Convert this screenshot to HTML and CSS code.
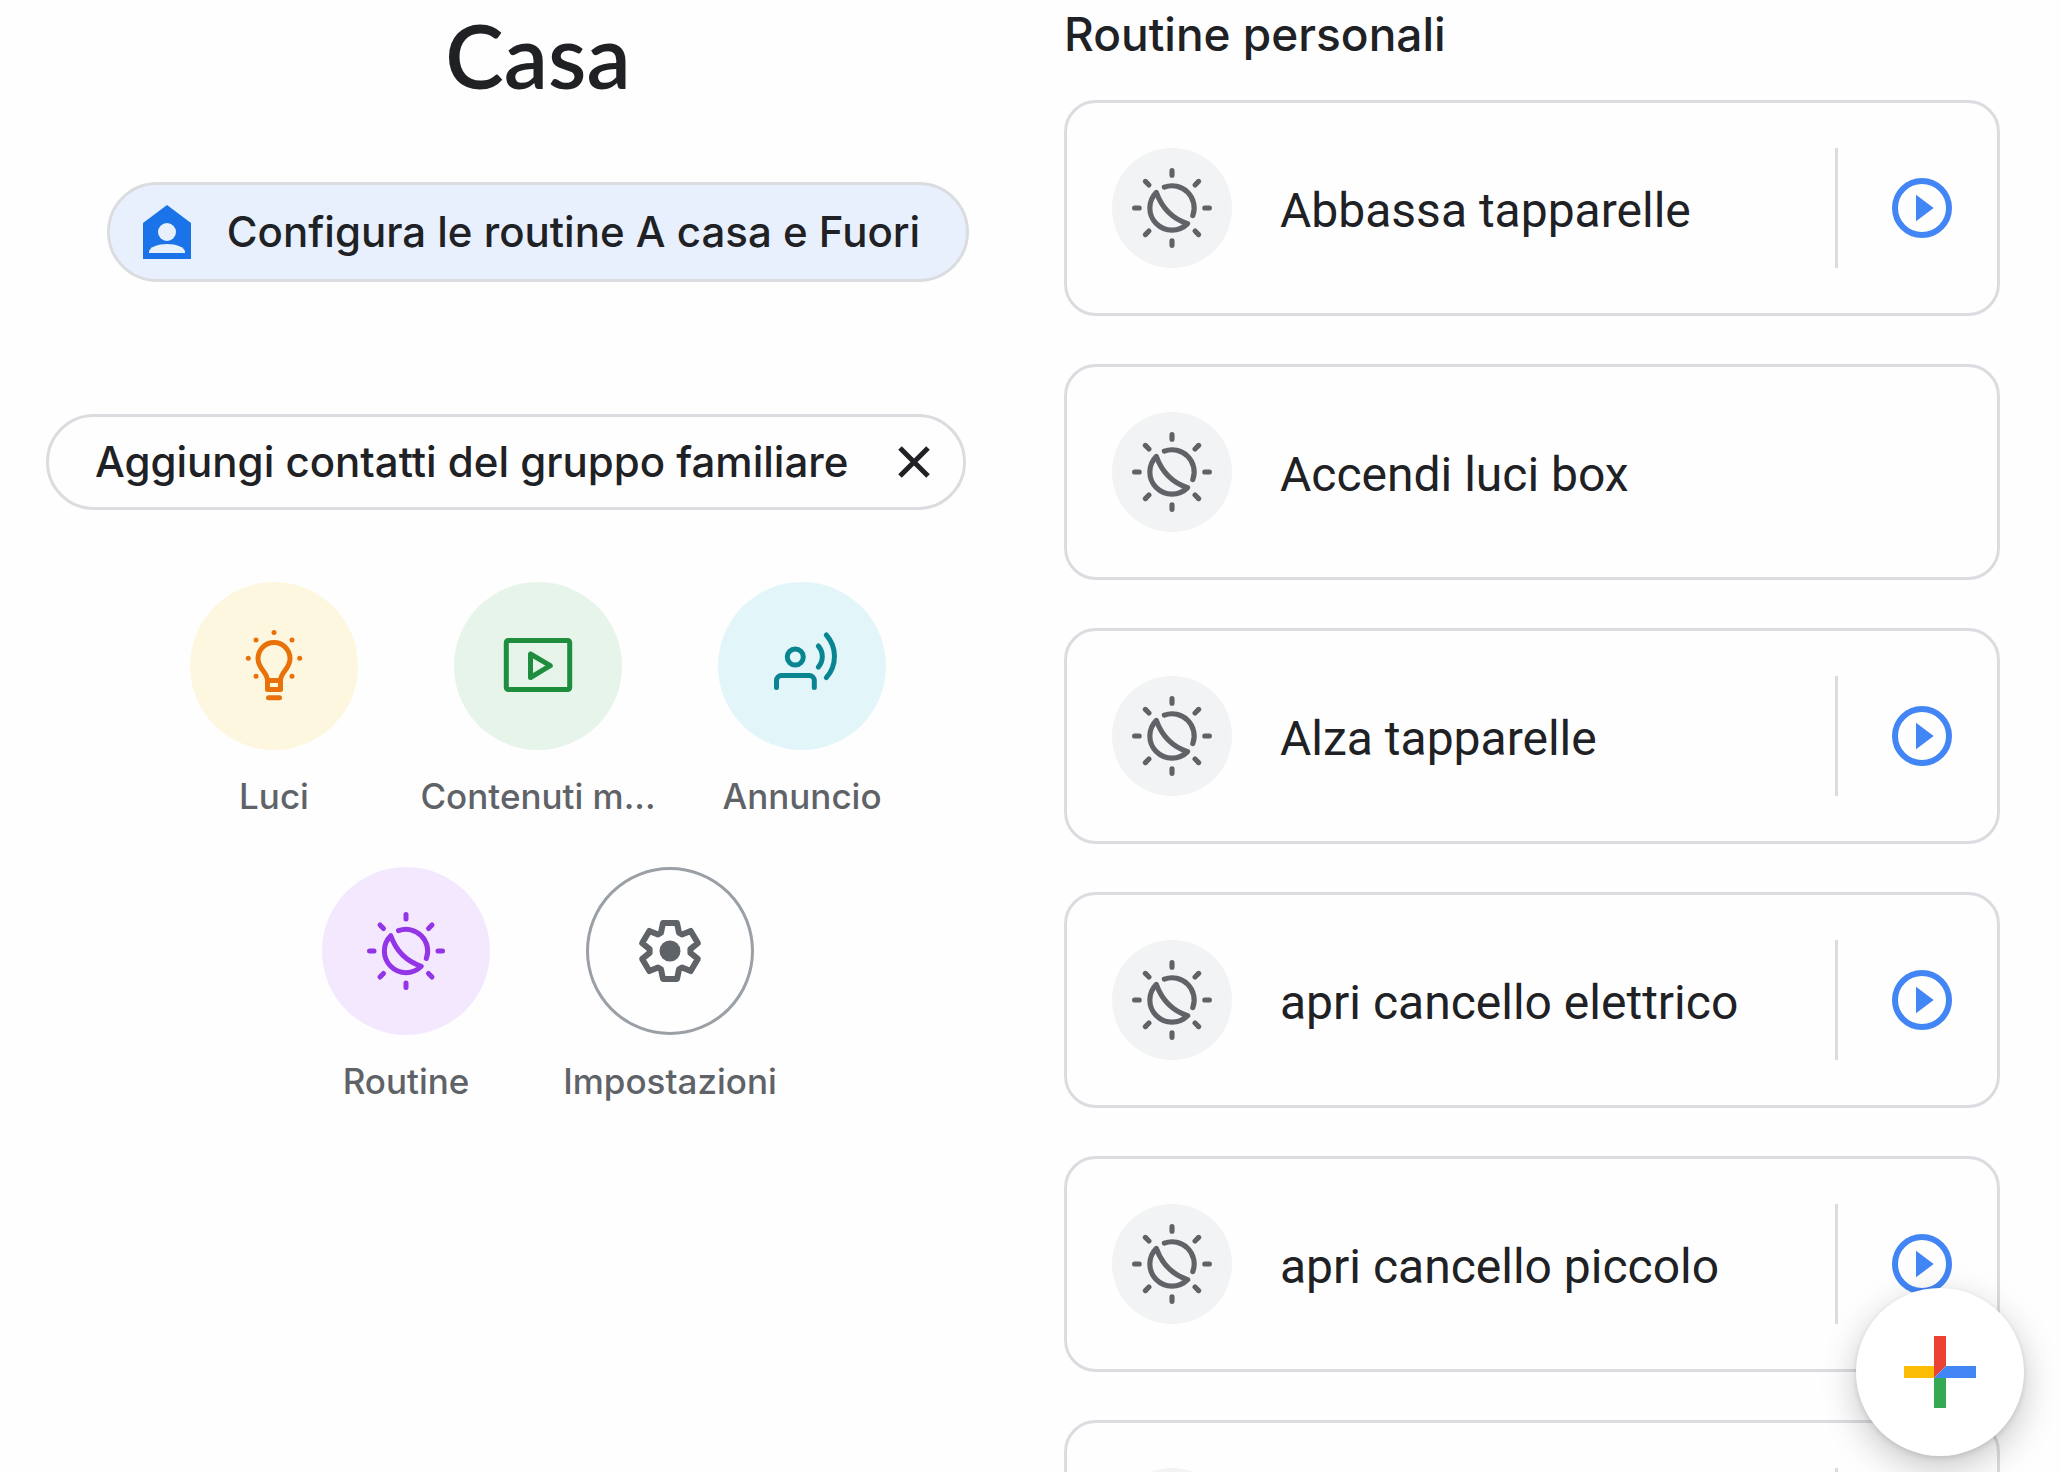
FILE: index.html
```html
<!DOCTYPE html>
<html lang="it">
<head>
<meta charset="utf-8">
<meta name="viewport" content="width=device-width, initial-scale=1.0">
<title>Casa</title>
<link rel="stylesheet" href="styles.css">
</head>
<body>

<svg class="sprite" aria-hidden="true">
    <symbol id="icon-routine" viewBox="-42 -42 84 84">
        <g fill="none" stroke="currentColor" stroke-width="5" stroke-linecap="round" stroke-linejoin="round">
            <path d="M0-36.500v4.500M0 36.500v-4.500M-36.500 0h4.500M36.500 0h-4.500M-26-26l3.500 3.500M26-26l-3.500 3.500M-26 26l3.500-3.500M26 26l-3.500-3.500"/>
            <path d="M-7.500-20.300A21.600 21.600 0 0 1 20.300 7.500"/>
            <path d="M-15.300-15.300A21.600 21.600 0 1 0 15.300 15.300Q-7 8-15.300-15.300z"/>
        </g>
    </symbol>
    <symbol id="icon-play" viewBox="0 0 60 60">
        <circle cx="30" cy="30" r="27" fill="none" stroke="currentColor" stroke-width="6"/>
        <path d="M24 16.700v26.600L41.700 30z" fill="currentColor"/>
    </symbol>
</svg>

<div class="page">
    <main class="home">
        <h1>Casa</h1>
        <button class="chip chip-setup" type="button">
            <svg width="48" height="54" viewBox="0 0 48 54" aria-hidden="true">
                <path d="M24 0l24 18v36H0V18z" fill="#1a73e8"/>
                <circle cx="24" cy="27" r="9" fill="#e8f0fe"/>
                <path d="M6 48v-1c0-5 9-8 18-8s18 3 18 8v1z" fill="#e8f0fe"/>
            </svg>
            <span class="chip-text">Configura le routine A casa e Fuori</span>
        </button>
        <div class="chip chip-invite">
            <a class="chip-text" href="#">Aggiungi contatti del gruppo familiare</a>
            <button class="close" type="button" aria-label="Chiudi">
                <svg width="32" height="32" viewBox="0 0 32 32" aria-hidden="true">
                    <path d="M2 2l28 28M30 2L2 30" stroke="currentColor" stroke-width="5"/>
                </svg>
            </button>
        </div>
        <nav class="tiles">
            <a class="tile" href="#">
                <span class="disc lights">
                    <svg width="84" height="84" viewBox="-42 -42 84 84" aria-hidden="true">
                        <g fill="none" stroke="currentColor" stroke-width="5" stroke-linecap="round" stroke-linejoin="round">
                            <path d="M-6.500 14.500C-6.500 6-16 3-16-7.500A16 16 0 0 1 16-7.500C16 3 6.500 6 6.500 14.500"/>
                            <path d="M-6.500 14.500h13v9h-13zM-5.500 31.700h11"/>
                        </g>
                        <g fill="currentColor">
                            <circle cx="0" cy="-33.500" r="2.500"/>
                            <circle cx="-18" cy="-26" r="2.500"/>
                            <circle cx="18" cy="-26" r="2.500"/>
                            <circle cx="-25.700" cy="-7.700" r="2.500"/>
                            <circle cx="25.700" cy="-7.700" r="2.500"/>
                            <circle cx="-18" cy="10.300" r="2.500"/>
                            <circle cx="18" cy="10.300" r="2.500"/>
                        </g>
                    </svg>
                </span>
                <span class="label">Luci</span>
            </a>
            <a class="tile" href="#">
                <span class="disc media">
                    <svg width="84" height="84" viewBox="-42 -42 84 84" aria-hidden="true">
                        <g fill="none" stroke="currentColor" stroke-width="5" stroke-linejoin="round">
                            <rect x="-31.700" y="-25.500" width="63.400" height="49" rx="2"/>
                            <path d="M-7.500-12v23.500L12.300-.3z"/>
                        </g>
                    </svg>
                </span>
                <span class="label">Contenuti m...</span>
            </a>
            <a class="tile" href="#">
                <span class="disc announce">
                    <svg width="84" height="84" viewBox="-42 -42 84 84" aria-hidden="true">
                        <g fill="none" stroke="currentColor" stroke-width="5" stroke-linecap="round">
                            <circle cx="-6.700" cy="-9" r="8"/>
                            <path d="M-25.500 21.500v-7a5 5 0 0 1 5-5H7.300a5 5 0 0 1 5 5v7"/>
                            <path d="M16.300-20a16 16 0 0 1 0 21.200M24.300-31a32 32 0 0 1 0 42.700"/>
                        </g>
                    </svg>
                </span>
                <span class="label">Annuncio</span>
            </a>
            <a class="tile" href="#">
                <span class="disc routine">
                    <svg width="84" height="84" aria-hidden="true"><use href="#icon-routine"/></svg>
                </span>
                <span class="label">Routine</span>
            </a>
            <a class="tile" href="#">
                <span class="disc settings">
                    <svg width="84" height="84" viewBox="-42 -42 84 84" aria-hidden="true">
                        <path fill="none" stroke="currentColor" stroke-width="6" stroke-linejoin="round" d="M-7-28h14L9-18.300l3 1.800L20.700-20.100 27.800-7.900 20.400-1.900v3.800L27.800 7.900 20.700 20.100 12 16.500l-3 1.800L7 28h-14L-9 18.300l-3-1.800L-20.700 20.100-27.800 7.900-20.400 1.900v-3.800L-27.800-7.900-20.700-20.100-12-16.500l3-1.800z"/>
                        <circle r="10.500" fill="currentColor"/>
                    </svg>
                </span>
                <span class="label">Impostazioni</span>
            </a>
        </nav>
    </main>

    <section class="routines">
        <h2>Routine personali</h2>
        <ul class="cards">
            <li class="card">
                <span class="badge"><svg width="86" height="86" aria-hidden="true"><use href="#icon-routine"/></svg></span>
                <span class="name">Abbassa tapparelle</span>
                <button class="play" type="button" aria-label="Avvia"><svg width="60" height="60"><use href="#icon-play"/></svg></button>
            </li>
            <li class="card">
                <span class="badge"><svg width="86" height="86" aria-hidden="true"><use href="#icon-routine"/></svg></span>
                <span class="name">Accendi luci box</span>
            </li>
            <li class="card">
                <span class="badge"><svg width="86" height="86" aria-hidden="true"><use href="#icon-routine"/></svg></span>
                <span class="name">Alza tapparelle</span>
                <button class="play" type="button" aria-label="Avvia"><svg width="60" height="60"><use href="#icon-play"/></svg></button>
            </li>
            <li class="card">
                <span class="badge"><svg width="86" height="86" aria-hidden="true"><use href="#icon-routine"/></svg></span>
                <span class="name">apri cancello elettrico</span>
                <button class="play" type="button" aria-label="Avvia"><svg width="60" height="60"><use href="#icon-play"/></svg></button>
            </li>
            <li class="card">
                <span class="badge"><svg width="86" height="86" aria-hidden="true"><use href="#icon-routine"/></svg></span>
                <span class="name">apri cancello piccolo</span>
                <button class="play" type="button" aria-label="Avvia"><svg width="60" height="60"><use href="#icon-play"/></svg></button>
            </li>
            <li class="card">
                <span class="badge"><svg width="86" height="86" aria-hidden="true"><use href="#icon-routine"/></svg></span>
                <span class="name"></span>
                <button class="play" type="button" aria-label="Avvia"><svg width="60" height="60"><use href="#icon-play"/></svg></button>
            </li>
        </ul>
    </section>
</div>

<button class="fab" type="button" aria-label="Aggiungi">
    <svg width="72" height="72" viewBox="0 0 72 72" aria-hidden="true">
        <path d="M30 0h12v30L30 42z" fill="#ea4335"/>
        <path d="M42 30h30v12H30z" fill="#4285f4"/>
        <path d="M0 30h30v12H0z" fill="#fbbc04"/>
        <path d="M30 42h12v30H30z" fill="#34a853"/>
    </svg>
</button>

</body>
</html>
```
FILE: styles.css
```css
* {
    box-sizing: border-box;
}
body {
    margin: 0;
    font-family: Inter, sans-serif;
    color: #202124;
    background-color: #fefefe;
}
button {
    margin: 0;
    padding: 0;
    border: 0;
    font: inherit;
    color: inherit;
    background: none;
    cursor: pointer;
}
a {
    color: inherit;
    text-decoration: none;
}
svg {
    display: block;
    flex-shrink: 0;
}
.sprite {
    position: absolute;
    width: 0;
    height: 0;
}
.page {
    display: grid;
    grid-template-columns: 1064fr 996fr;
    height: 100vh;
    overflow: hidden;
}

/* home */
.home {
    display: flex;
    flex-direction: column;
    align-items: center;
    padding-left: 12px;
}
h1 {
    margin: 0 0 72px;
    font-family: Lato, sans-serif;
    font-size: 88px;
    font-weight: 600;
    line-height: 110px;
}
.chip {
    display: flex;
    align-items: center;
    border: 3px solid #dadce0;
    border-radius: 50px;
    font-size: 42px;
    font-weight: 500;
    white-space: nowrap;
}
.chip-text {
    padding-bottom: 2px;
}
.chip-setup {
    gap: 36px;
    height: 100px;
    margin-bottom: 132px;
    padding: 0 46px 0 33px;
    background-color: #e8f0fe;
}
.chip-invite {
    align-self: flex-start;
    gap: 50px;
    height: 96px;
    margin: 0 0 72px 34px;
    padding: 0 33px 0 46px;
}
.tiles {
    display: flex;
    flex-wrap: wrap;
    justify-content: center;
    gap: 49px 0;
    max-width: 792px;
}
.tile {
    display: flex;
    flex-direction: column;
    align-items: center;
    gap: 24px;
    width: 264px;
}
.disc {
    display: flex;
    align-items: center;
    justify-content: center;
    width: 168px;
    height: 168px;
    border-radius: 50%;
}
.label {
    font-size: 35px;
    font-weight: 500;
    line-height: 44px;
    color: #5f6368;
}
.lights {
    color: #e8710a;
    background-color: #fef7e0;
}
.media {
    color: #1e8e3e;
    background-color: #e6f4ea;
}
.announce {
    color: #098591;
    background-color: #e2f6fa;
}
.routine {
    color: #9334e6;
    background-color: #f3e8fd;
}
.settings {
    border: 3px solid #9aa0a6;
    color: #5f6368;
}

/* routines */
.routines {
    padding-right: 60px;
}
h2 {
    margin: 0 0 31px;
    font-size: 46px;
    font-weight: 500;
    line-height: 69px;
}
.cards {
    display: flex;
    flex-direction: column;
    gap: 48px;
    margin: 0;
    padding: 0;
    list-style: none;
}
.card {
    display: flex;
    align-items: center;
    gap: 48px;
    padding: 45px;
    border: 3px solid #dadce0;
    border-radius: 32px;
}
.badge {
    display: flex;
    align-items: center;
    justify-content: center;
    width: 120px;
    height: 120px;
    border-radius: 50%;
    color: #5f6368;
    background-color: #f1f3f4;
}
.name {
    flex: 1;
    padding-top: 5px;
    font-family: Roboto, sans-serif;
    font-size: 48px;
    line-height: 56px;
}
.play {
    height: 120px;
    padding-left: 54px;
    border-left: 3px solid #dadce0;
    color: #4285f4;
}
.fab {
    position: fixed;
    right: 36px;
    bottom: 16px;
    display: flex;
    align-items: center;
    justify-content: center;
    width: 168px;
    height: 168px;
    border-radius: 50%;
    background-color: #fff;
    box-shadow: 0 12px 36px rgba(0, 0, 0, .22), 0 2px 6px rgba(0, 0, 0, .12);
}
```
